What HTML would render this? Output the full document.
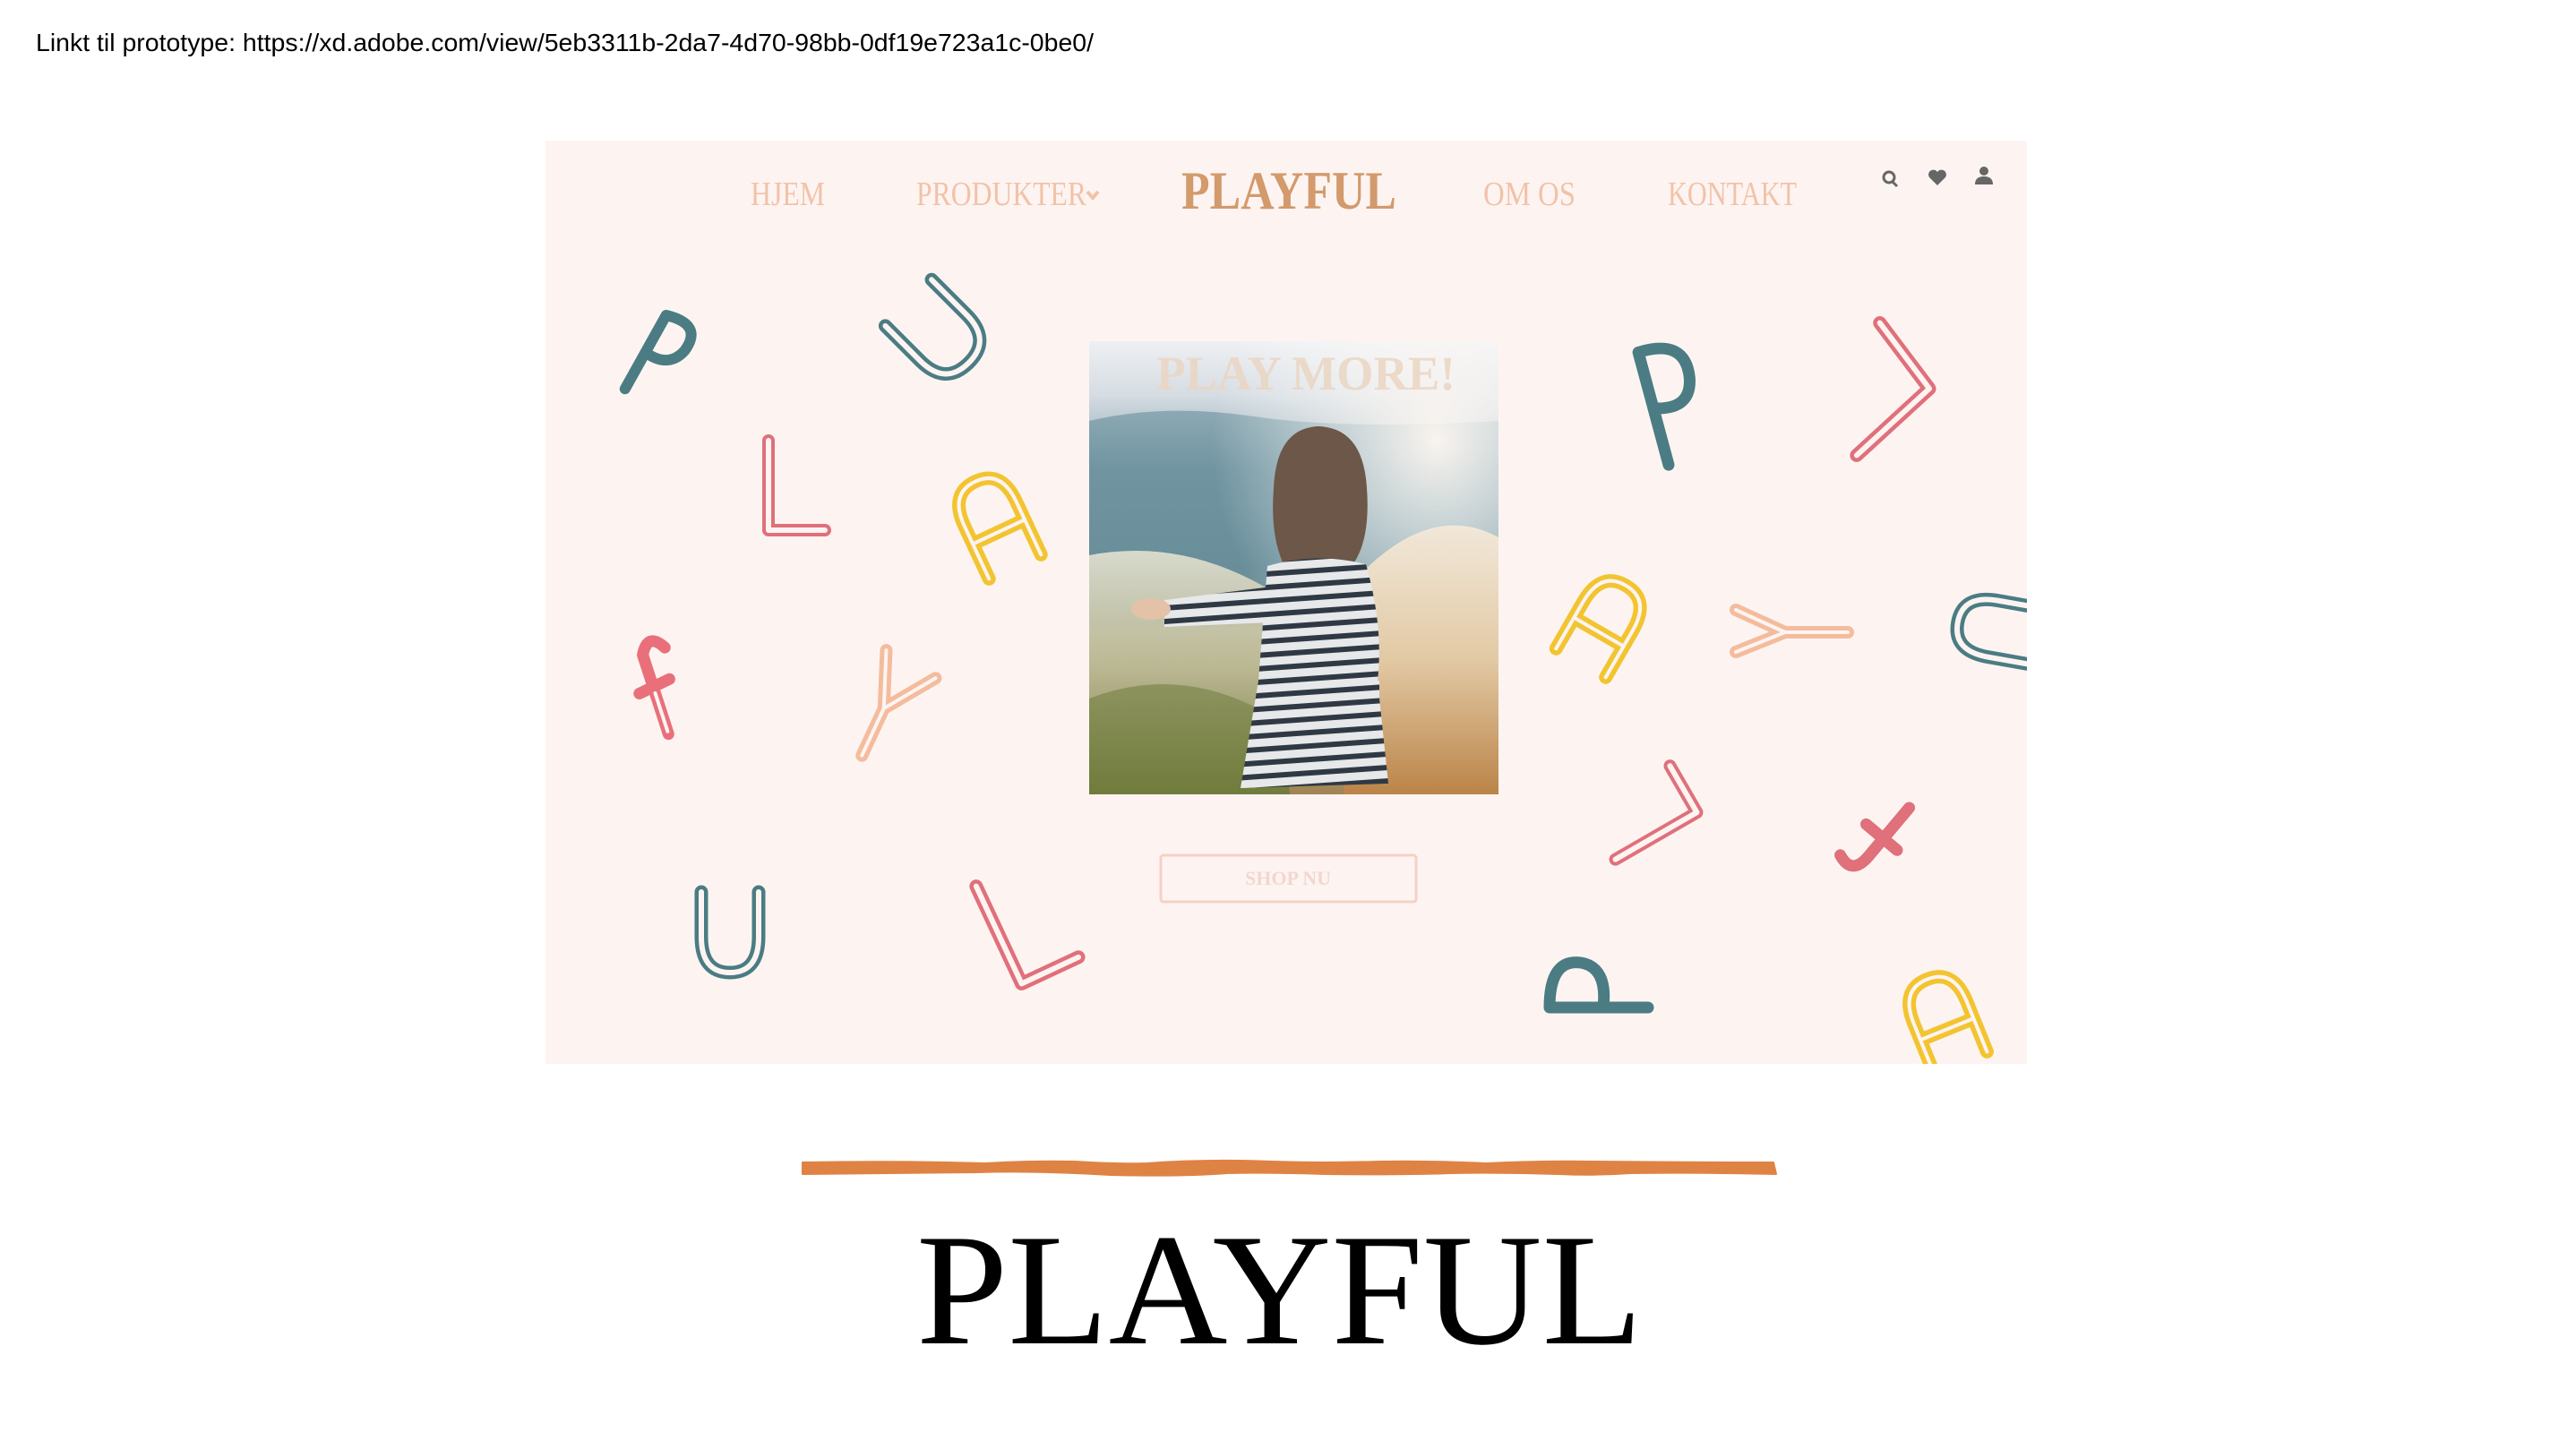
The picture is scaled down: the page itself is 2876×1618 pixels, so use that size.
<!DOCTYPE html>
<html><head><meta charset="utf-8"><style>
html,body{margin:0;padding:0;background:#fff;width:2876px;height:1618px;overflow:hidden}
svg{display:block}
</style></head><body>
<svg width="2876" height="1618" viewBox="0 0 2876 1618" xmlns="http://www.w3.org/2000/svg">
<defs>
<clipPath id="mock"><rect x="609" y="157" width="1654" height="1031"/></clipPath>
<clipPath id="photo"><rect x="1216" y="381" width="457" height="506"/></clipPath>
<linearGradient id="sky" x1="0" y1="0" x2="0" y2="1">
<stop offset="0" stop-color="#eef0f3"/><stop offset="0.12" stop-color="#d5dce2"/><stop offset="0.28" stop-color="#86a4b0"/><stop offset="0.5" stop-color="#7696a0"/><stop offset="0.7" stop-color="#c9c3ad"/><stop offset="1" stop-color="#a08452"/></linearGradient>
<radialGradient id="glow" cx="0.85" cy="0.22" r="0.55"><stop offset="0" stop-color="#fff8f2" stop-opacity="0.95"/><stop offset="1" stop-color="#fff" stop-opacity="0"/></radialGradient>
<linearGradient id="grassR" x1="0" y1="0" x2="0" y2="1"><stop offset="0" stop-color="#f1e8da"/><stop offset="0.5" stop-color="#e2c9a4"/><stop offset="1" stop-color="#bb8448"/></linearGradient>
<linearGradient id="grassL" x1="0" y1="0" x2="0" y2="1"><stop offset="0" stop-color="#e4e2d2"/><stop offset="0.5" stop-color="#b7b48e"/><stop offset="1" stop-color="#6c7a3a"/></linearGradient>
<pattern id="stripes" width="20" height="15" patternUnits="userSpaceOnUse" patternTransform="rotate(-4)"><rect width="20" height="15" fill="#e7e8ea"/><rect width="20" height="6" fill="#2f3943"/></pattern>
</defs>

<text x="40" y="57" font-family="'Liberation Sans',sans-serif" font-size="28" fill="#000" textLength="1181" lengthAdjust="spacingAndGlyphs">Linkt til prototype: https://xd.adobe.com/view/5eb3311b-2da7-4d70-98bb-0df19e723a1c-0be0/</text>

<rect x="609" y="157" width="1654" height="1031" fill="#fdf4f2"/>

<g font-family="'Liberation Serif',serif" fill="#f2c2a8" font-size="38">
<text x="838" y="229" textLength="83" lengthAdjust="spacingAndGlyphs">HJEM</text>
<text x="1023" y="229" textLength="190" lengthAdjust="spacingAndGlyphs">PRODUKTER</text>
<path d="M1214 214 l6 7 l6 -7" stroke="#f2c2a8" stroke-width="4" fill="none"/>
<text x="1656" y="229" textLength="103" lengthAdjust="spacingAndGlyphs">OM OS</text>
<text x="1862" y="229" textLength="144" lengthAdjust="spacingAndGlyphs">KONTAKT</text>
</g>
<text x="1319" y="233" font-family="'Liberation Serif',serif" font-weight="bold" font-size="60" fill="#d39a6c" textLength="240" lengthAdjust="spacingAndGlyphs">PLAYFUL</text>

<g fill="#666" stroke="#666">
<circle cx="2109" cy="198" r="6" fill="none" stroke-width="3"/><path d="M2113 203 l5 5" stroke-width="3"/>
<path d="M2163 207 l-9 -9 a5 5 0 0 1 9 -6 a5 5 0 0 1 9 6 z" stroke="none"/>
<circle cx="2215" cy="191" r="5" stroke="none"/><path d="M2205 206 q0 -9 10 -9 q10 0 10 9 z" stroke="none"/>
</g>

<g clip-path="url(#photo)">
<rect x="1216" y="381" width="457" height="506" fill="url(#sky)"/>
<path d="M1216 470 Q1300 450 1400 465 Q1500 480 1673 470 L1673 700 L1216 700 Z" fill="#5f8896" opacity="0.55"/>
<rect x="1216" y="381" width="457" height="506" fill="url(#glow)"/>
<path d="M1520 640 Q1600 560 1673 600 L1673 887 L1500 887 Z" fill="url(#grassR)"/>
<path d="M1216 620 Q1320 600 1420 660 L1440 887 L1216 887 Z" fill="url(#grassL)" opacity="0.9"/>
<path d="M1216 780 Q1320 740 1420 800 L1420 887 L1216 887 Z" fill="#6f7c3c" opacity="0.55"/>
<path d="M1422 545 Q1425 478 1472 476 Q1522 478 1526 545 Q1530 600 1512 628 L1432 628 Q1418 595 1422 545 Z" fill="#6d5748"/>
<path d="M1415 632 Q1470 616 1525 630 Q1545 700 1538 760 L1550 875 L1385 880 L1405 760 Z" fill="url(#stripes)"/>
<path d="M1420 655 L1300 670 L1300 700 L1420 695 Z" fill="url(#stripes)"/>
<ellipse cx="1285" cy="680" rx="22" ry="12" fill="#e3c2a8"/>
<path d="M1480 760 L1540 760 L1540 790 L1490 790 Z" fill="url(#stripes)"/>
</g>
<text x="1291" y="435" font-family="'Liberation Serif',serif" font-weight="bold" font-size="54" fill="#ead5c2" fill-opacity="0.85" textLength="334" lengthAdjust="spacingAndGlyphs">PLAY  MORE!</text>

<rect x="1296" y="955" width="285" height="52" rx="3" fill="none" stroke="#f6d0c6" stroke-width="3"/>
<text x="1438" y="988" text-anchor="middle" font-family="'Liberation Serif',serif" font-weight="bold" font-size="22" fill="#f3d6cf">SHOP NU</text>

<g clip-path="url(#mock)" fill="none" stroke-linecap="round" stroke-linejoin="round">
<g transform="translate(733,396) rotate(20) translate(-50,-50)"><path d="M30 98 L45 5 Q88 0 78 35 Q68 60 38 52" stroke="#4b7c83" stroke-width="12"/></g>
<g transform="translate(1045,371) rotate(-45) translate(-50,-50)"><path d="M15 5 L15 60 Q15 100 52 100 Q88 100 88 60 L88 5" stroke="#4b7c83" stroke-width="15"/><path d="M15 5 L15 60 Q15 100 52 100 Q88 100 88 60 L88 5" stroke="#fdf4f2" stroke-width="6"/></g>
<g transform="translate(883,542) translate(-50,-50)"><path d="M25 0 L25 100 L88 100" stroke="#e0707a" stroke-width="14"/><path d="M25 0 L25 100 L88 100" stroke="#fdf4f2" stroke-width="6"/></g>
<g transform="translate(1110,583) rotate(-25) translate(-50,-50)"><path d="M18 105 L18 40 Q18 0 50 0 Q82 0 82 40 L82 105 M18 62 L82 62" stroke="#f3c431" stroke-width="15"/><path d="M18 105 L18 40 Q18 0 50 0 Q82 0 82 40 L82 105 M18 62 L82 62" stroke="#fdf4f2" stroke-width="4"/></g>
<g transform="translate(736,762) rotate(-18) translate(-50,-50)"><path d="M68 15 Q55 -8 42 15 L42 108 M25 55 L62 50" stroke="#e9707b" stroke-width="13"/><path d="M42 60 L42 105" stroke="#fdf4f2" stroke-width="4"/></g>
<g transform="translate(991,782) rotate(25) translate(-50,-50)"><path d="M25 0 L50 60 L88 5 M50 60 L50 118" stroke="#f4bc9d" stroke-width="14"/><path d="M25 0 L50 60 L88 5 M50 60 L50 118" stroke="#fdf4f2" stroke-width="4"/></g>
<g transform="translate(815,1041) translate(-50,-50)"><path d="M18 5 L18 55 Q18 95 50 95 Q82 95 82 55 L82 5" stroke="#4b7c83" stroke-width="15"/><path d="M18 5 L18 55 Q18 95 50 95 Q82 95 82 55 L82 5" stroke="#fdf4f2" stroke-width="6"/></g>
<g transform="translate(1140,1038) rotate(-25) translate(-50,-50)"><path d="M25 -15 L25 105 L95 105" stroke="#e0707a" stroke-width="15"/><path d="M25 -15 L25 105 L95 105" stroke="#fdf4f2" stroke-width="6"/></g>

<g transform="translate(1865,442) rotate(-12) translate(-50,-50)"><path d="M32 125 L25 -5 Q80 -10 75 35 Q70 70 30 60" stroke="#4b7c83" stroke-width="13"/></g>
<g transform="translate(2118,439) rotate(8) translate(-50,-50)"><path d="M20 -25 L85 40 L15 125" stroke="#e0707a" stroke-width="15"/><path d="M20 -25 L85 40 L15 125" stroke="#fdf4f2" stroke-width="6"/></g>
<g transform="translate(1790,697) rotate(30) translate(-50,-50)"><path d="M18 100 L18 40 Q18 0 50 0 Q82 0 82 40 L82 100 M18 60 L82 60" stroke="#f3c431" stroke-width="15"/><path d="M18 100 L18 40 Q18 0 50 0 Q82 0 82 40 L82 100 M18 60 L82 60" stroke="#fdf4f2" stroke-width="4"/></g>
<g transform="translate(1998,706) rotate(-90) translate(-50,-50)"><path d="M28 -10 L50 45 L75 -10 M50 45 L50 115" stroke="#f4bc9d" stroke-width="14"/><path d="M28 -10 L50 45 L75 -10 M50 45 L50 115" stroke="#fdf4f2" stroke-width="4"/></g>
<g transform="translate(2230,703) rotate(100) translate(-50,-50)"><path d="M18 5 L18 55 Q18 95 50 95 Q82 95 82 55 L82 5" stroke="#4b7c83" stroke-width="15"/><path d="M18 5 L18 55 Q18 95 50 95 Q82 95 82 55 L82 5" stroke="#fdf4f2" stroke-width="6"/></g>
<g transform="translate(1843,908) rotate(-120) translate(-50,-50)"><path d="M25 -10 L25 95 L85 95" stroke="#e0707a" stroke-width="14"/><path d="M25 -10 L25 95 L85 95" stroke="#fdf4f2" stroke-width="6"/></g>
<g transform="translate(2095,930) rotate(40) translate(-50,-50)"><path d="M60 5 L60 75 Q60 105 35 95 M35 50 L80 50" stroke="#e0707a" stroke-width="13"/></g>
<g transform="translate(1785,1105) rotate(-90) translate(-50,-50)"><path d="M30 105 L30 -5 Q85 -5 80 30 Q75 60 30 55" stroke="#4b7c83" stroke-width="13"/></g>
<g transform="translate(2170,1140) rotate(-22) translate(-50,-50)"><path d="M18 100 L18 40 Q18 0 50 0 Q82 0 82 40 L82 100 M18 60 L82 60" stroke="#f3c431" stroke-width="15"/><path d="M18 100 L18 40 Q18 0 50 0 Q82 0 82 40 L82 100 M18 60 L82 60" stroke="#fdf4f2" stroke-width="4"/></g>
</g>

<path d="M896 1298 Q1000 1296 1100 1299 Q1150 1296 1200 1297 Q1250 1300 1280 1299 Q1350 1294 1420 1297 Q1480 1299 1540 1297 Q1600 1296 1660 1299 Q1720 1296 1780 1297 Q1880 1298 1980 1298 L1983 1311 Q1900 1309 1820 1310 Q1780 1313 1740 1311 Q1680 1309 1620 1310 Q1560 1312 1480 1311 Q1420 1309 1370 1310 Q1320 1314 1240 1312 Q1160 1307 1090 1309 Q1000 1310 896 1311 Z" fill="#df8345" stroke="#df8345" stroke-width="2" stroke-linejoin="round"/>

<text x="1023" y="1500" font-family="'Liberation Serif',serif" font-size="178" fill="#000" textLength="811" lengthAdjust="spacingAndGlyphs">PLAYFUL</text>
</svg>
</body></html>
